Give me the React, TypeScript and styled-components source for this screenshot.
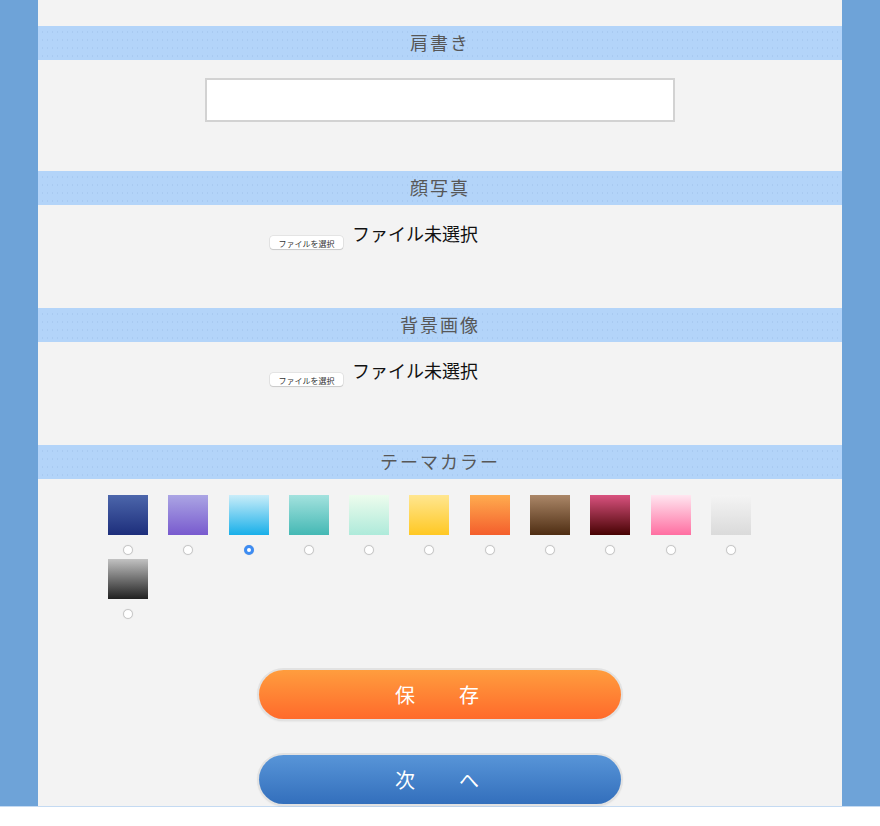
import React from "react";
import styled, { createGlobalStyle } from "styled-components";

const Global = createGlobalStyle`
  html, body { margin: 0; padding: 0; background: #ffffff; }
  body { font-family: "Noto Sans CJK JP", "Noto Sans", sans-serif; }
  * { box-sizing: border-box; }
`;

const Page = styled.div`
  display: flex;
  justify-content: center;
  background: #6ea3d8;
  height: 807px;
  border-bottom: 1px solid #c4daf2;
`;

const Panel = styled.main`
  width: 804px;
  height: 806px;
  background: #f3f3f3;
  padding-top: 26px;
  display: flex;
  flex-direction: column;
`;

const SectionHeader = styled.h2`
  margin: 0;
  height: 34px;
  line-height: 32px;
  text-align: center;
  font-size: 18px;
  font-weight: 400;
  letter-spacing: 2px;
  color: #575757;
  background-color: #b3d4f9;
  background-image: radial-gradient(circle, rgba(130, 170, 215, 0.22) 0.5px, transparent 0.8px);
  background-size: 5px 8px;
  background-position: 2px 2px;
`;

const InputSection = styled.div`
  display: flex;
  justify-content: center;
  padding: 18px 0 49px;
`;

const TextInput = styled.input`
  width: 470px;
  height: 44px;
  border: 2px solid #d2d2d2;
  background: #ffffff;
  outline: none;
`;

const FileSection = styled.div`
  height: 103px;
  padding: 16px 0 0 232px;
  display: flex;
  align-items: flex-start;
  gap: 9px;
`;

const FileButton = styled.span`
  margin-top: 15px;
  width: 73px;
  height: 13px;
  background: #ffffff;
  border-radius: 3px;
  box-shadow: 0 0 0 0.5px rgba(0, 0, 0, 0.12), 0 1px 1px rgba(0, 0, 0, 0.12);
  font-size: 8px;
  line-height: 15px;
  text-align: center;
  color: #333;
  white-space: nowrap;
  overflow: hidden;
`;

const FileLabel = styled.span`
  font-size: 18px;
  line-height: 24px;
  color: #111;
`;

const SwatchGrid = styled.div`
  display: flex;
  flex-wrap: wrap;
  column-gap: 20.3px;
  width: 760px;
  padding: 16px 0 0 70px;
`;

const SwatchItem = styled.label`
  width: 40px;
  height: 64px;
  display: flex;
  flex-direction: column;
  align-items: center;
`;

const Swatch = styled.span<{ $from: string; $to: string }>`
  width: 40px;
  height: 40px;
  background: linear-gradient(to bottom, ${(p) => p.$from}, ${(p) => p.$to});
`;

const Radio = styled.span<{ $checked?: boolean }>`
  margin-top: 10px;
  width: 10px;
  height: 10px;
  border-radius: 50%;
  background: #ffffff;
  border: ${(p) => (p.$checked ? "3px solid #3d8cf2" : "1px solid #c8c8c8")};
  box-shadow: 0 0 1px rgba(0, 0, 0, 0.15);
`;

const Buttons = styled.div`
  margin-top: 47px;
  display: flex;
  flex-direction: column;
  align-items: center;
  gap: 36px;
`;

const PillButton = styled.button<{ $from: string; $to: string }>`
  width: 362px;
  height: 49px;
  border: none;
  border-radius: 25px;
  background: linear-gradient(to bottom, ${(p) => p.$from}, ${(p) => p.$to});
  box-shadow: 0 0 0 2px #e2e2e2, 0 1px 3px rgba(0, 0, 0, 0.25);
  color: #ffffff;
  font-family: "Noto Sans CJK JP", sans-serif;
  font-size: 20px;
  font-weight: 400;
  letter-spacing: 12px;
  padding-left: 12px;
`;

const swatches: [string, string][] = [
  ["#4c66ab", "#1d2e7b"],
  ["#aba5e4", "#785ace"],
  ["#c9edf9", "#18afe9"],
  ["#a3e2de", "#44b8b4"],
  ["#edfced", "#aeeada"],
  ["#ffe690", "#ffc823"],
  ["#ffac4f", "#f45e2c"],
  ["#ab8768", "#4e2d12"],
  ["#d9527f", "#470202"],
  ["#ffe6f0", "#ff6ea1"],
  ["#f4f4f4", "#dadada"],
  ["#c2c2c2", "#202020"],
];

export default function App() {
  return (
    <>
      <Global />
      <Page>
        <Panel>
          <SectionHeader>肩書き</SectionHeader>
          <InputSection>
            <TextInput type="text" />
          </InputSection>

          <SectionHeader>顔写真</SectionHeader>
          <FileSection>
            <FileButton>ファイルを選択</FileButton>
            <FileLabel>ファイル未選択</FileLabel>
          </FileSection>

          <SectionHeader>背景画像</SectionHeader>
          <FileSection>
            <FileButton>ファイルを選択</FileButton>
            <FileLabel>ファイル未選択</FileLabel>
          </FileSection>

          <SectionHeader>テーマカラー</SectionHeader>
          <SwatchGrid>
            {swatches.map(([a, b], i) => (
              <SwatchItem key={i}>
                <Swatch $from={a} $to={b} />
                <Radio $checked={i === 2} />
              </SwatchItem>
            ))}
          </SwatchGrid>

          <Buttons>
            <PillButton $from="#ff9d3e" $to="#ff6a2b">保　存</PillButton>
            <PillButton $from="#5895d8" $to="#336fbc">次　へ</PillButton>
          </Buttons>
        </Panel>
      </Page>
    </>
  );
}
